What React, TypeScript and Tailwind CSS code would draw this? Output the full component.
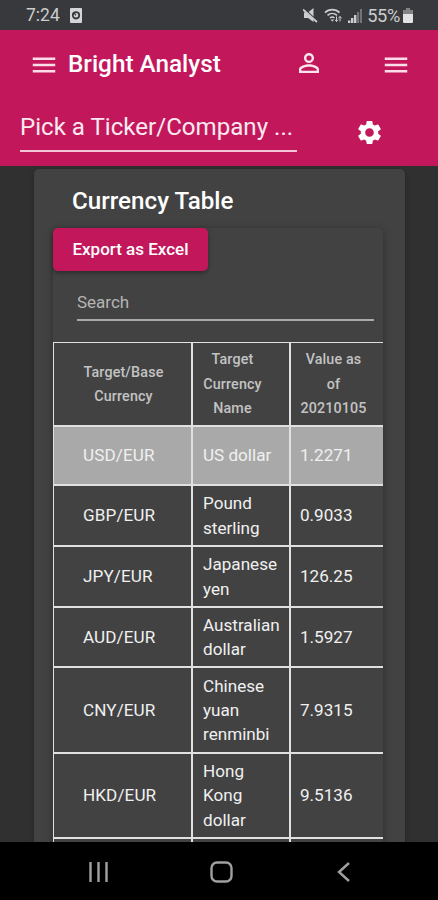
import { MdMenu, MdPersonOutline, MdSettings } from "react-icons/md";

interface Rate {
  pair: string;
  name: string[];
  value: string;
  height: string;
  highlighted?: boolean;
}

const rates: Rate[] = [
  { pair: "USD/EUR", name: ["US dollar"], value: "1.2271", height: "h-[59px]", highlighted: true },
  { pair: "GBP/EUR", name: ["Pound", "sterling"], value: "0.9033", height: "h-[61px]" },
  { pair: "JPY/EUR", name: ["Japanese", "yen"], value: "126.25", height: "h-[61px]" },
  { pair: "AUD/EUR", name: ["Australian", "dollar"], value: "1.5927", height: "h-[60px]" },
  { pair: "CNY/EUR", name: ["Chinese", "yuan", "renminbi"], value: "7.9315", height: "h-[86px]" },
  { pair: "HKD/EUR", name: ["Hong", "Kong", "dollar"], value: "9.5136", height: "h-[85px]" },
  { pair: "", name: [], value: "", height: "h-[60px]" },
];

const columns = [["Target/Base", "Currency"], ["Target", "Currency", "Name"], ["Value as", "of", "20210105"]];

function Lines({ lines }: { lines: string[] }) {
  return (
    <div>
      {lines.map((line) => (
        <div key={line} className="whitespace-nowrap">
          {line}
        </div>
      ))}
    </div>
  );
}

function StatusBar() {
  return (
    <div className="flex h-[30px] shrink-0 items-center justify-between bg-[#37393c] pl-[26px] pr-[25px] pt-[2px] text-[#cbcdce]">
      <div className="flex items-center gap-[10px]">
        <span className="text-[17.5px] leading-none">7:24</span>
        <svg className="-translate-y-px" width="12" height="15" viewBox="0 0 12 15">
          <rect width="12" height="15" rx="1" fill="#d3d5d6" />
          <circle cx="6" cy="7.3" r="3.2" fill="none" stroke="#37393c" strokeWidth="1.8" />
          <path d="M6 7.3 4 5" stroke="#37393c" strokeWidth="1.2" />
        </svg>
      </div>
      <div className="flex items-center">
        <svg className="mr-[6px]" width="15" height="15" viewBox="0 0 15 15">
          <path d="M1 4.500h4L10.500 0v14L5 10H1z" fill="currentColor" />
          <path d="m0 .5 14.500 13" stroke="#37393c" strokeWidth="2.200" />
          <path d="m0 1.500 14 12.500" stroke="currentColor" strokeWidth="1.700" />
        </svg>
        <svg className="mr-[5px]" width="19" height="15" viewBox="0 0 19 15" fill="none" stroke="currentColor">
          <path d="M1 4.600C5 .6 11.500.6 15.500 4.600" strokeWidth="1.700" />
          <path d="M3.500 7.400c2.800-2.500 6.700-2.500 9.500 0" strokeWidth="1.600" />
          <path d="M6 10c1.500-1.300 3-1.300 4.500 0" strokeWidth="1.500" />
          <path d="m6.600 11.500 1.700 2.300 1.700-2.300z" fill="currentColor" stroke="none" />
          <path d="M12.500 8.500v5m-1.600-1.800 1.600 1.800 1.500-1.800M16 13.500v-5m-1.600 1.800L16 8.500l1.600 1.800" strokeWidth="1" />
        </svg>
        <svg className="mr-[5px]" width="14" height="14" viewBox="0 0 14 14" fill="currentColor">
          <path d="M0 11.500h2.400V14H0zM3 9h2.400v5H3zM6 6h2.400v8H6z" />
          <path d="M9 3h2.200v11H9zM12 0h2v14h-2z" opacity=".4" />
        </svg>
        <span className="text-[18.2px] leading-none tracking-[-0.3px]">55%</span>
        <svg className="ml-[3px]" width="10" height="15" viewBox="0 0 10 15">
          <path d="M3 0h4v2h3v5H0V2h3z" fill="#828486" />
          <path d="M0 6h10v8a1 1 0 0 1-1 1H1a1 1 0 0 1-1-1z" fill="#e2e3e4" />
        </svg>
      </div>
    </div>
  );
}

function Header() {
  return (
    <header className="h-[136px] shrink-0 bg-[#c2185b] text-white">
      <div className="flex h-[69px] items-center pl-[29px] pr-[27px]">
        <MdMenu className="size-[30px] text-[#fbdce8]" />
        <h1 className="ml-[9px] text-[24.3px] font-medium leading-none">Bright Analyst</h1>
        <MdPersonOutline className="ml-auto mr-[57px] size-[30px] -translate-y-[2px] text-[#fbe5ed]" />
        <MdMenu className="size-[30px] text-[#fbdce8]" />
      </div>
      <div className="flex items-center pl-[20px]">
        <div className="h-[53px] w-[277px] border-b-2 border-[#f3c5d7] pt-[13px] text-[24.1px] leading-[30px] text-[#fdeaf1]">
          Pick a Ticker/Company ...
        </div>
        <MdSettings className="ml-[58px] mt-[13px] size-[29px]" />
      </div>
    </header>
  );
}

function CurrencyTable() {
  return (
    <table className="w-full table-fixed border-separate border-spacing-0">
      <colgroup>
        <col className="w-[140px]" />
        <col className="w-[98px]" />
        <col />
      </colgroup>
      <thead>
        <tr className="h-[85px]">
          {columns.map((lines, i) => (
            <th
              key={lines.join(" ")}
              className={`border-b-2 border-t border-[#e0e0e0] p-0 text-center align-middle text-[14.3px] font-medium leading-[24.4px] tracking-[0.15px] text-[#c3c3c3] ${
                i === 0 ? "border-l border-r-2 pl-[2px]" : i === 1 ? "border-r-2 pr-[17px]" : "pr-[7px]"
              }`}
            >
              <Lines lines={lines} />
            </th>
          ))}
        </tr>
      </thead>
      <tbody>
        {rates.map((rate) => (
          <tr
            key={rate.pair}
            className={`${rate.height} text-[17.1px] leading-[24.3px] text-[#f0f0f0] ${rate.highlighted ? "bg-[#a9a9a9]" : ""}`}
          >
            <td className="border-b-2 border-l border-r-2 border-[#e0e0e0] p-0 pl-[29px] align-middle tracking-[0.1px]">
              {rate.pair}
            </td>
            <td className="border-b-2 border-r-2 border-[#e0e0e0] p-0 pl-[10px] align-middle">
              <Lines lines={rate.name} />
            </td>
            <td className="border-b-2 border-[#e0e0e0] p-0 pl-[9px] align-middle">{rate.value}</td>
          </tr>
        ))}
      </tbody>
    </table>
  );
}

function NavigationBar() {
  return (
    <nav className="grid h-[58px] shrink-0 grid-cols-[196px_50px_1fr] items-center bg-black pt-[2px] text-[#a0a0a0]">
      <svg className="ml-[88px]" width="21" height="20" viewBox="0 0 21 20" fill="none" stroke="currentColor" strokeWidth="2.4">
        <path d="M2.500 0v20M10.500 0v20M18.500 0v20" />
      </svg>
      <svg className="justify-self-center" width="23" height="22" viewBox="0 0 23 22" fill="none" stroke="currentColor" strokeWidth="2.4">
        <rect x="1.500" y="1.500" width="20" height="19" rx="5.500" />
      </svg>
      <svg className="ml-[91px]" width="14" height="20" viewBox="0 0 14 20" fill="none" stroke="currentColor" strokeWidth="2.4">
        <path d="M12 1 2 10l10 9" />
      </svg>
    </nav>
  );
}

export default function App() {
  return (
    <div className="flex h-[900px] w-[438px] flex-col overflow-hidden bg-[#303030] font-[Roboto,sans-serif]">
      <StatusBar />
      <Header />
      <main className="min-h-0 flex-1 overflow-hidden pl-[34px] pr-[33px] pt-[3px]">
        <section className="h-[720px] rounded-[5px] bg-[#424242] pl-[19px] pr-[22px] shadow-[0_2px_5px_rgba(0,0,0,0.3)]">
          <h2 className="h-[59px] pl-[19px] pt-[17px] text-[24.2px] font-medium leading-[30px] text-white">Currency Table</h2>
          <div className="h-[660px] rounded-[5px] bg-[#424242] shadow-[0_2px_8px_rgba(0,0,0,0.3)]">
            <button className="block h-[43px] w-[155px] rounded-[5px] bg-[#c2185b] text-[17px] font-medium text-white shadow-[0_2px_4px_rgba(0,0,0,0.35)]">
              Export as Excel
            </button>
            <div className="ml-[24px] mr-[9px] h-[50px] border-b-2 border-[#a9a9a9] pt-[19px] text-[17px] leading-[24px] text-[#b5b5b5]">
              Search
            </div>
            <div className="pt-[21px]">
              <CurrencyTable />
            </div>
          </div>
        </section>
      </main>
      <NavigationBar />
    </div>
  );
}
